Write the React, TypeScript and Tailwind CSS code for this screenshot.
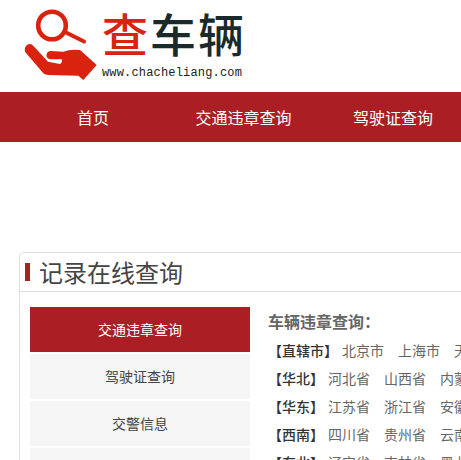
const cjk = "font-['Noto_Sans_CJK_SC','Liberation_Sans',sans-serif]";

const regions = [
  { name: "【直辖市】", cities: ["北京市", "上海市", "天津市", "重庆市"] },
  { name: "【华北】", cities: ["河北省", "山西省", "内蒙古", "北京市"] },
  { name: "【华东】", cities: ["江苏省", "浙江省", "安徽省", "福建省"] },
  { name: "【西南】", cities: ["四川省", "贵州省", "云南省", "西藏"] },
  { name: "【东北】", cities: ["辽宁省", "吉林省", "黑龙江省"] },
];

const tabs = ["交通违章查询", "驾驶证查询", "交警信息", "车辆信息"];

const Logo = () => (
  <svg viewBox="20 5 80 80" className="h-[80px] w-[80px] shrink-0">
    <circle cx="52" cy="25.5" r="13.8" fill="none" stroke="#d9230f" strokeWidth="4.6" />
    <path d="M66 32.5 L84 41.5" fill="none" stroke="#d9230f" strokeWidth="4" strokeLinecap="round" />
    <path
      d="M25 51.7 Q24 47 27 45 Q30 43 33 45.5 L48 61.7 L60 64 Q63 62 61.7 59.3 L50 59.3 Q46 58 46.5 55 Q47 51 51 51 L63.3 51.7 Q70 49 80 50 L96.7 65 L83.3 80 L78.3 75.7 L48.3 75 Q45 75 43.3 73.3 Z"
      fill="#d9230f"
    />
  </svg>
);

const App = () => {
  return (
    <div className={`h-[460px] w-[461px] overflow-hidden bg-white ${cjk}`}>
      <header className="flex h-[92px] items-start pl-5 pt-[5px]">
        <Logo />
        <div className="-mt-[2px] ml-[2px] shrink-0">
          <div className="h-[62px] text-[46px] leading-[58px] font-medium tracking-[2px] whitespace-nowrap text-[#1a2a2a]">
            <span className="text-[#d9230f]">查</span>车辆
          </div>
          <div className="text-[12px] leading-[16px] tracking-[0.17px] text-[#222] font-['Liberation_Mono',monospace]">
            www.chacheliang.com
          </div>
        </div>
      </header>

      <nav className="flex h-[50px] items-center bg-[#ab1e24] text-base text-white">
        <a className="w-[186px] shrink-0 text-center">首页</a>
        <a className="w-[115px] shrink-0 text-center whitespace-nowrap">交通违章查询</a>
        <a className="w-[184px] shrink-0 text-center whitespace-nowrap">驾驶证查询</a>
      </nav>

      <section className="mt-[110px] ml-[19px] w-[500px] rounded-t-[5px] border border-[#ddd]">
        <div className="flex h-[39px] items-center border-b border-[#ddd] pl-[5px]">
          <span className="h-[18px] w-[5px] bg-[#ab1e24]" />
          <h2 className="ml-[9px] text-2xl leading-[38px] text-[#444]">记录在线查询</h2>
        </div>

        <div className="flex pt-[15px] pl-[10px]">
          <ul className="flex w-[220px] shrink-0 flex-col gap-[2px] text-center text-sm">
            {tabs.map((tab, i) => (
              <li
                key={tab}
                className={`h-[45px] leading-[45px] ${
                  i === 0 ? "bg-[#ab1e24] text-white" : "bg-[#f5f5f5] text-[#444]"
                }`}
              >
                {tab}
              </li>
            ))}
          </ul>

          <div className="-mt-px ml-[18px] w-[400px] shrink-0 text-sm leading-[28px]">
            <h3 className="h-[30px] text-base leading-[30px] font-bold text-[#666]">车辆违章查询：</h3>
            {regions.map((r) => (
              <div key={r.name} className="flex whitespace-nowrap">
                <b className="mr-1 font-medium text-[#333]">{r.name}</b>
                <div className="flex gap-[14px] text-[#666]">
                  {r.cities.map((c) => (
                    <a key={c}>{c}</a>
                  ))}
                </div>
              </div>
            ))}
          </div>
        </div>
      </section>
    </div>
  );
};

export default App;
